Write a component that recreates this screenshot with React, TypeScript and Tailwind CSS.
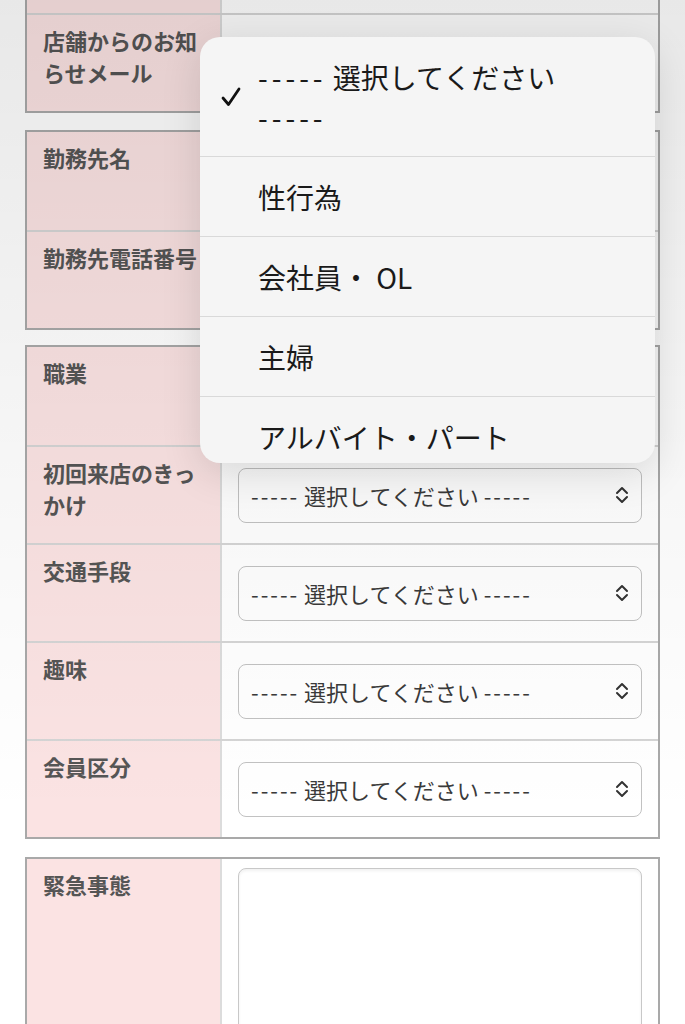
import React from 'react';

type Field = 'none' | 'select' | 'textarea';

interface FormRow {
  label: string;
  field: Field;
}

const topRows: FormRow[] = [
  { label: '', field: 'none' },
  { label: '店舗からのお知らせメール', field: 'none' },
];

const workRows: FormRow[] = [
  { label: '勤務先名', field: 'none' },
  { label: '勤務先電話番号', field: 'none' },
];

const profileRows: FormRow[] = [
  { label: '職業', field: 'select' },
  { label: '初回来店のきっかけ', field: 'select' },
  { label: '交通手段', field: 'select' },
  { label: '趣味', field: 'select' },
  { label: '会員区分', field: 'select' },
];

const options = ['性行為', '会社員・ OL', '主婦', 'アルバイト・パート'];

const UpDownIcon = () => (
  <svg width="14" height="20" viewBox="0 0 14 20" fill="none" stroke="#333" strokeWidth="2" strokeLinecap="round" strokeLinejoin="round">
    <path d="M2 8 L7 3 L12 8" />
    <path d="M2 12 L7 17 L12 12" />
  </svg>
);

const CheckIcon = () => (
  <svg width="22" height="22" viewBox="0 0 22 22" fill="none" stroke="#111" strokeWidth="2.8" strokeLinecap="round" strokeLinejoin="round">
    <path d="M3 12 L8.5 18.5 L19 3" />
  </svg>
);

const SelectBox = () => (
  <div className="flex h-[55px] w-full items-center justify-between rounded-lg border border-[#c2c2c2] bg-white pl-3 pr-3 text-[22px] text-[#3a3a3a]">
    <span>
      <span className="tracking-[2px]">-----</span> 選択してください <span className="tracking-[2px]">-----</span>
    </span>
    <UpDownIcon />
  </div>
);

const FormTable = ({ rows, className = '' }: { rows: FormRow[]; className?: string }) => (
  <div className={`border-2 border-[#a9a9a9] ${className}`}>
    {rows.map((row, i) => (
      <div key={i} className={i > 0 ? 'flex h-[98px] border-t-2 border-[#d5d5d5]' : 'flex h-[98px]'}>
        <div className="w-[195px] shrink-0 border-r-2 border-[#dcdcdc] bg-[#fbe3e3] px-4 pt-[9px] text-[22px] font-bold leading-[32px] text-[#555]">
          {row.label}
        </div>
        <div className="flex flex-1 items-center bg-white px-4">
          {row.field === 'select' && <SelectBox />}
        </div>
      </div>
    ))}
  </div>
);

export default function App() {
  return (
    <div className="relative h-[1024px] overflow-hidden bg-white font-['Noto_Sans_CJK_JP',sans-serif]">
      <div className="flex flex-col px-[25px]">
        <FormTable rows={topRows} className="-mt-[87px]" />
        <FormTable rows={workRows} className="mt-[17px]" />
        <FormTable rows={profileRows} className="mt-[15px]" />

        {/* 緊急事態 */}
        <div className="mt-[18px] border-2 border-[#a9a9a9]">
          <div className="flex h-[240px]">
            <div className="w-[195px] shrink-0 border-r-2 border-[#dcdcdc] bg-[#fbe3e3] px-4 pt-[9px] text-[22px] font-bold leading-[32px] text-[#555]">
              緊急事態
            </div>
            <div className="flex-1 bg-white px-4 pt-[9px]">
              <div className="h-[220px] rounded-lg border border-[#c8c8c8] bg-white shadow-[inset_0_2px_3px_rgba(0,0,0,0.06)]" />
            </div>
          </div>
        </div>
      </div>

      {/* dimmed backdrop behind the open picker */}
      <div className="pointer-events-none absolute inset-0 bg-linear-to-b from-black/[0.09] via-black/[0.035] via-45% to-transparent to-80%" />

      {/* native select picker */}
      <div className="absolute left-[200px] top-[37px] h-[426px] w-[455px] overflow-hidden rounded-[20px] bg-[#f5f5f5] text-[28px] text-[#1a1a1a] shadow-[0_10px_40px_rgba(0,0,0,0.12)]">
        <div className="flex h-[120px] items-center border-b border-[#d9d9d9]">
          <div className="flex w-[58px] shrink-0 justify-center pl-1">
            <CheckIcon />
          </div>
          <div className="w-[330px] leading-[40px]">
            <span className="whitespace-nowrap tracking-[4px]">-----</span> 選択してください{' '}
            <span className="whitespace-nowrap tracking-[4px]">-----</span>
          </div>
        </div>
        {options.map((opt, i) => (
          <div key={opt} className={i < options.length - 1 ? 'flex h-[80px] items-center border-b border-[#d9d9d9] pl-[58px]' : 'flex h-[80px] items-center pl-[58px]'}>
            {opt}
          </div>
        ))}
      </div>
    </div>
  );
}
